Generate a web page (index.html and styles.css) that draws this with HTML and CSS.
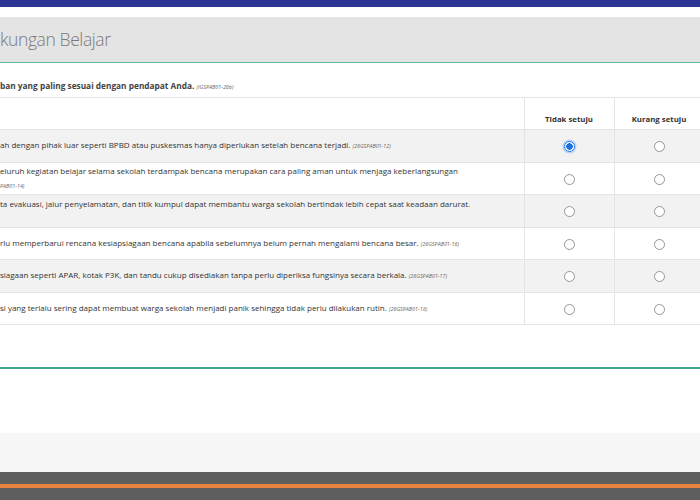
FILE: index.html
```html
<!DOCTYPE html>
<html lang="id">
<head>
  <meta charset="UTF-8">
  <meta name="viewport" content="width=device-width, initial-scale=1.0">
  <title>Lingkungan Belajar</title>
  <link rel="stylesheet" href="styles.css">
</head>
<body>
  <div class="topbar"></div>

  <div class="section-head">
    <h2>kungan Belajar</h2>
  </div>

  <div class="question">
    <p class="instruction">ban yang paling sesuai dengan pendapat Anda. <span class="code">(IGSPAB01-26b)</span></p>

    <table class="grid">
      <tr class="grid-head">
        <th class="stmt"></th>
        <th>Tidak setuju</th>
        <th>Kurang setuju</th>
        <th class="rest"></th>
      </tr>
      <tr class="shade">
        <td class="stmt">ah dengan pihak luar seperti BPBD atau puskesmas hanya diperlukan setelah bencana terjadi. <span class="code">(26GSPAB01-12)</span></td>
        <td><input type="radio" name="q12" checked></td>
        <td><input type="radio" name="q12"></td>
        <td class="rest"></td>
      </tr>
      <tr>
        <td class="stmt">eluruh kegiatan belajar selama sekolah terdampak bencana merupakan cara paling aman untuk menjaga keberlangsungan<br><span class="code">PAB01-14)</span></td>
        <td><input type="radio" name="q14"></td>
        <td><input type="radio" name="q14"></td>
        <td class="rest"></td>
      </tr>
      <tr class="shade">
        <td class="stmt top">ta evakuasi, jalur penyelamatan, dan titik kumpul dapat membantu warga sekolah bertindak lebih cepat saat keadaan darurat.</td>
        <td><input type="radio" name="q15"></td>
        <td><input type="radio" name="q15"></td>
        <td class="rest"></td>
      </tr>
      <tr>
        <td class="stmt">rlu memperbarui rencana kesiapsiagaan bencana apabila sebelumnya belum pernah mengalami bencana besar. <span class="code">(26GSPAB01-16)</span></td>
        <td><input type="radio" name="q16"></td>
        <td><input type="radio" name="q16"></td>
        <td class="rest"></td>
      </tr>
      <tr class="shade">
        <td class="stmt">siagaan seperti APAR, kotak P3K, dan tandu cukup disediakan tanpa perlu diperiksa fungsinya secara berkala. <span class="code">(26GSPAB01-17)</span></td>
        <td><input type="radio" name="q17"></td>
        <td><input type="radio" name="q17"></td>
        <td class="rest"></td>
      </tr>
      <tr>
        <td class="stmt">si yang terlalu sering dapat membuat warga sekolah menjadi panik sehingga tidak perlu dilakukan rutin. <span class="code">(26GSPAB01-18)</span></td>
        <td><input type="radio" name="q18"></td>
        <td><input type="radio" name="q18"></td>
        <td class="rest"></td>
      </tr>
    </table>
  </div>

  <div class="section-end"></div>

  <div class="footer-strip"></div>
  <div class="footer">
    <div class="footer-line"></div>
  </div>
</body>
</html>
```

FILE: styles.css
```css
body {
  margin: 0;
  font-family: 'Open Sans', 'Noto Sans', sans-serif;
  color: #333;
  background: #fff;
  width: 700px;
  height: 500px;
  overflow: hidden;
}

.topbar {
  height: 7px;
  background: #2c3592;
  margin-bottom: 10px;
}

.section-head {
  height: 45px;
  background: #e4e4e4;
  border-bottom: 1px solid #5fb8a2;
  display: flex;
  align-items: center;
}

.section-head h2 {
  margin: -1px 0 0;
  font-size: 17.5px;
  font-weight: 300;
  color: #7a7a7a;
  letter-spacing: -0.4px;
}

.question {
  padding-top: 18px;
}

.instruction {
  margin: 0 0 6px;
  font-size: 8.3px;
  font-weight: 700;
  color: #444;
  height: 10px;
  line-height: 10px;
}

.code {
  font-size: 5.4px;
  font-style: italic;
  font-weight: 400;
  color: #666;
}

.grid {
  width: 700px;
  border-collapse: collapse;
  table-layout: fixed;
  border-top: 1px solid #e4e4e4;
  border-bottom: 1px solid #e4e4e4;
}

.grid th,
.grid td {
  padding: 0;
  text-align: center;
  border-left: 1px solid #e4e4e4;
}

.grid .stmt {
  width: 524px;
  text-align: left;
  border-left: none;
}

.grid th {
  width: 90px;
  height: 32px;
  vertical-align: bottom;
  padding-bottom: 5px;
  font-size: 7.8px;
  font-weight: 700;
  color: #333;
  box-sizing: border-box;
}

.grid .rest {
  width: auto;
}

.grid td {
  height: 32.5px;
  box-sizing: border-box;
  font-size: 8px;
  line-height: 14px;
  border-top: 1px solid #e4e4e4;
}

.grid td.top {
  vertical-align: top;
  padding-top: 2px;
}

.grid tr.shade td {
  background: #f2f2f2;
}

.grid input[type="radio"] {
  appearance: none;
  width: 11px;
  height: 11px;
  margin: 0;
  border: 1px solid #959595;
  border-radius: 50%;
  background: #fff;
  vertical-align: middle;
}

.grid input[type="radio"]:checked {
  border-color: #1a73e8;
  background: radial-gradient(circle, #1a6fe0 0 3px, #fff 3.5px);
  box-shadow: 0 0 0 1.5px #b9d3f7;
}

.section-end {
  height: 42px;
  border-bottom: 2px solid #3aa88c;
}

.footer-strip {
  height: 39px;
  margin-top: 64px;
  background: #f7f7f7;
}

.footer {
  height: 28px;
  background: #5e5e5e;
  padding-top: 12px;
  box-sizing: border-box;
}

.footer-line {
  height: 4px;
  background: #e8843f;
}
```
